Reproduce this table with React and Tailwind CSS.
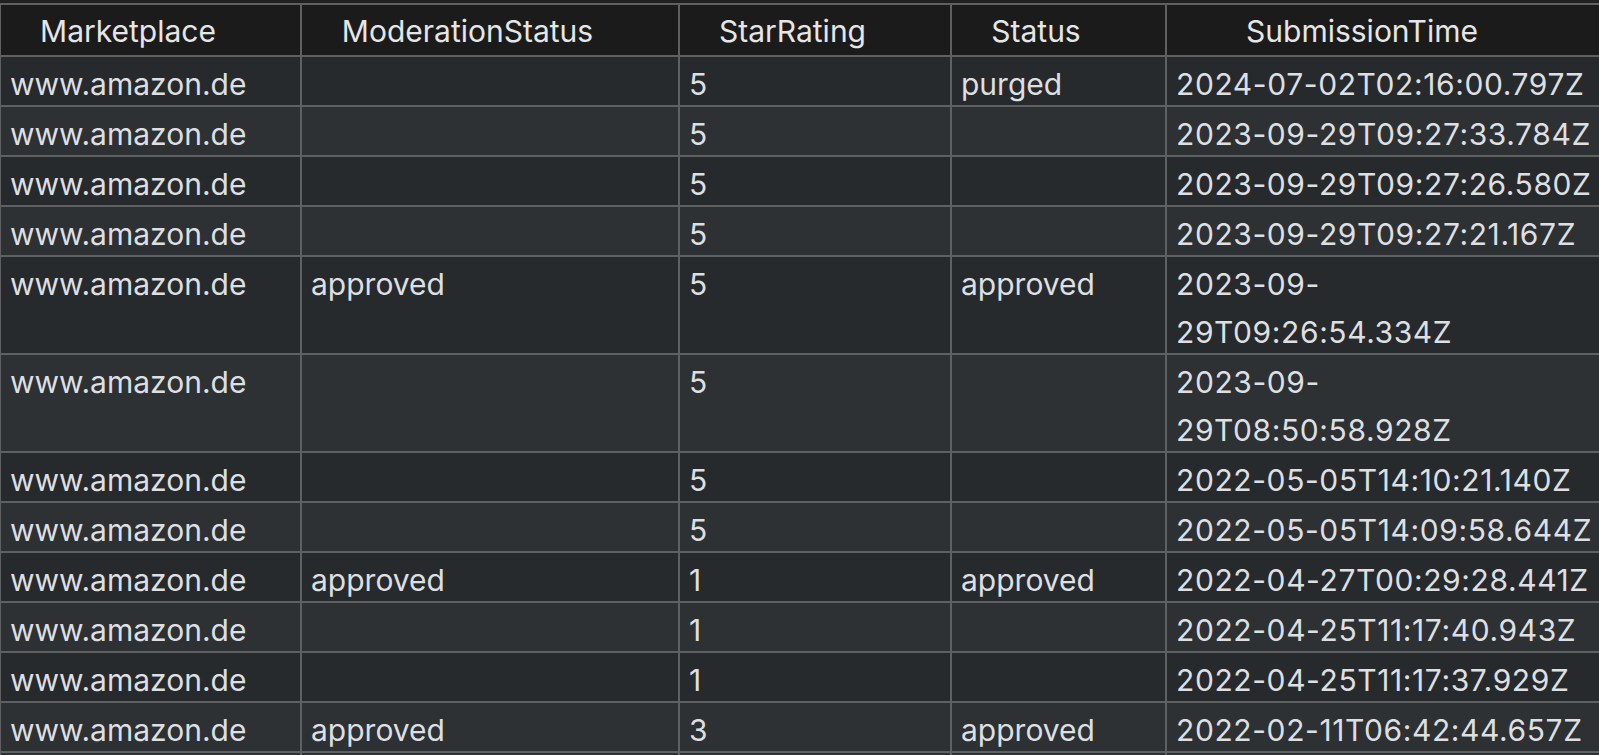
import React from 'react';

const rows = [
  { market: 'www.amazon.de', moderation: '', rating: '5', status: 'purged', time: ['2024-07-02T02:16:00.797Z'] },
  { market: 'www.amazon.de', moderation: '', rating: '5', status: '', time: ['2023-09-29T09:27:33.784Z'] },
  { market: 'www.amazon.de', moderation: '', rating: '5', status: '', time: ['2023-09-29T09:27:26.580Z'] },
  { market: 'www.amazon.de', moderation: '', rating: '5', status: '', time: ['2023-09-29T09:27:21.167Z'] },
  { market: 'www.amazon.de', moderation: 'approved', rating: '5', status: 'approved', time: ['2023-09-', '29T09:26:54.334Z'] },
  { market: 'www.amazon.de', moderation: '', rating: '5', status: '', time: ['2023-09-', '29T08:50:58.928Z'] },
  { market: 'www.amazon.de', moderation: '', rating: '5', status: '', time: ['2022-05-05T14:10:21.140Z'] },
  { market: 'www.amazon.de', moderation: '', rating: '5', status: '', time: ['2022-05-05T14:09:58.644Z'] },
  { market: 'www.amazon.de', moderation: 'approved', rating: '1', status: 'approved', time: ['2022-04-27T00:29:28.441Z'] },
  { market: 'www.amazon.de', moderation: '', rating: '1', status: '', time: ['2022-04-25T11:17:40.943Z'] },
  { market: 'www.amazon.de', moderation: '', rating: '1', status: '', time: ['2022-04-25T11:17:37.929Z'] },
  { market: 'www.amazon.de', moderation: 'approved', rating: '3', status: 'approved', time: ['2022-02-11T06:42:44.657Z'] },
];

const headers = ['Marketplace', 'ModerationStatus', 'StarRating', 'Status', 'SubmissionTime'];

export default function App() {
  const cell = 'border-2 border-[#5e6062] pl-[9px] pr-2 align-top leading-[48px] whitespace-nowrap';

  return (
    <div className="h-[755px] w-full overflow-hidden bg-[#202020] pt-[3px] font-['Inter','Noto_Sans',sans-serif] text-[30px] text-[#dedfe0]">
      <table className="table-fixed border-collapse w-[1603px] -ml-px">
        <colgroup>
          <col className="w-[301px]" />
          <col className="w-[378px]" />
          <col className="w-[272px]" />
          <col className="w-[215px]" />
          <col className="w-[437px]" />
        </colgroup>
        <thead>
          <tr className="bg-[#1b1b1b]">
            {headers.map((h) => (
              <th
                key={h}
                className="border-2 border-[#5e6062] h-[52px] pl-[10px] pr-[55px] text-center font-normal text-[#e6e6e6] whitespace-nowrap"
              >
                <div className="translate-y-[1px]">{h}</div>
              </th>
            ))}
          </tr>
        </thead>
        <tbody>
          {rows.map((r, i) => (
            <tr key={i} className={i % 2 === 0 ? 'bg-[#272a2d]' : 'bg-[#2d3134]'}>
              <td className={cell}>
                <div className="translate-y-[3px]">{r.market}</div>
              </td>
              <td className={cell}>
                <div className="translate-y-[3px]">{r.moderation}</div>
              </td>
              <td className={cell}>
                <div className="translate-y-[3px]">{r.rating}</div>
              </td>
              <td className={cell}>
                <div className="translate-y-[3px]">{r.status}</div>
              </td>
              <td className={cell}>
                <div className="translate-y-[3px] tracking-[0.6px]">
                  {r.time.map((t) => (
                    <div key={t}>{t}</div>
                  ))}
                </div>
              </td>
            </tr>
          ))}
          <tr className="bg-[#2d3134]">
            <td className={cell}>&nbsp;</td>
            <td className={cell}></td>
            <td className={cell}></td>
            <td className={cell}></td>
            <td className={cell}></td>
          </tr>
        </tbody>
      </table>
    </div>
  );
}
